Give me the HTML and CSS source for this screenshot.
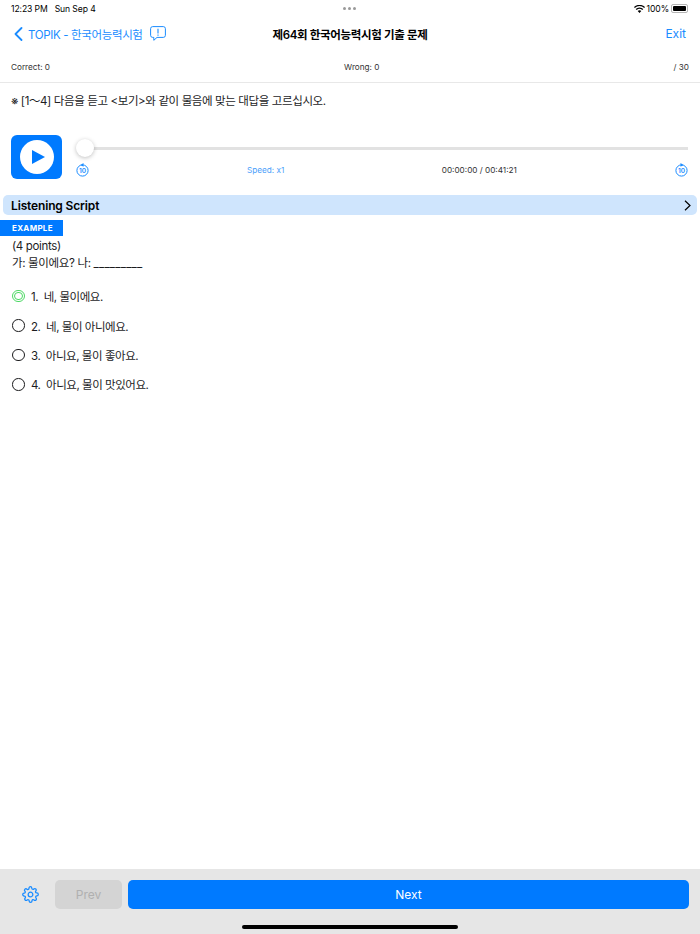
FILE: index.html
```html
<!DOCTYPE html>
<html lang="ko">
<head>
    <meta charset="UTF-8">
    <title>TOPIK</title>
    <link rel="stylesheet" href="styles.css">
</head>
<body>
    <div class="status">
        <div class="status-left"><span>12:23 PM</span><span>Sun Sep 4</span></div>
        <div class="dots"><i></i><i></i><i></i></div>
        <div class="status-right">
            <svg width="11" height="8" viewBox="0 0 11 8"><path d="M5.5 8 3.7 6a2.6 2.6 0 0 1 3.6 0zM2.7 5 1.7 3.9a5.5 5.5 0 0 1 7.6 0L8.3 5a4 4 0 0 0-5.6 0zM.8 3 0 2a8 8 0 0 1 11 0l-.8 1A6.8 6.8 0 0 0 .8 3z" fill="#000"/></svg>
            <span>100%</span>
            <div class="battery"><div class="battery-fill"></div></div>
        </div>
    </div>

    <div class="nav">
        <div class="nav-left">
            <svg class="back" width="9" height="14" viewBox="0 0 9 14"><path d="M7.5 1 1.500 7l6 6" fill="none" stroke="#1a8cff" stroke-width="1.800" stroke-linecap="round" stroke-linejoin="round"/></svg>
            <span>TOPIK - 한국어능력시험</span>
            <svg class="report" width="16" height="15" viewBox="0 0 16 15"><path d="M2.700.6h10.600a2.100 2.100 0 0 1 2.100 2.100v6.600a2.100 2.100 0 0 1-2.100 2.100H7L3.800 14.300v-2.900H2.700A2.100 2.100 0 0 1 .6 9.300V2.700A2.100 2.100 0 0 1 2.700.6z" fill="none" stroke="#1a8cff"/><path d="M8 2.800v4.700M8 8.600v1.100" stroke="#1a8cff" stroke-width="1.100"/></svg>
        </div>
        <div class="nav-title">제64회 한국어능력시험 기출 문제</div>
        <div class="nav-right">Exit</div>
    </div>

    <div class="stats">
        <div>Correct: 0</div>
        <div>Wrong: 0</div>
        <div>/ 30</div>
    </div>

    <div class="question">※ [1～4] 다음을 듣고 &lt;보기&gt;와 같이 물음에 맞는 대답을 고르십시오.</div>

    <div class="player">
        <div class="play-btn">
            <div class="play-circle">
                <svg width="13" height="14" viewBox="0 0 13 14"><path d="M0 0 13 7 0 14z" fill="#007aff"/></svg>
            </div>
        </div>
        <div class="player-main">
            <div class="slider"><div class="thumb"></div></div>
            <div class="controls">
                <svg class="skip" width="13" height="14" viewBox="0 0 13 14"><circle cx="6.500" cy="7.500" r="5.600" fill="none" stroke="#1a8cff"/><path d="M7.500 0 4.500 1.900 7.500 3.800z" fill="#1a8cff"/><text x="6.500" y="10" text-anchor="middle" class="skip-num">10</text></svg>
                <div class="speed">Speed: x1</div>
                <div class="time">00:00:00 / 00:41:21</div>
                <svg class="skip" width="13" height="14" viewBox="0 0 13 14"><circle cx="6.500" cy="7.500" r="5.600" fill="none" stroke="#1a8cff"/><path d="M5.500 0 8.500 1.900 5.500 3.800z" fill="#1a8cff"/><text x="6.500" y="10" text-anchor="middle" class="skip-num">10</text></svg>
            </div>
        </div>
    </div>

    <div class="script-bar">
        <span>Listening Script</span>
        <svg width="7" height="11" viewBox="0 0 7 11"><path d="M1 .7 6 5.500 1 10.300" fill="none" stroke="#000" stroke-width="1.200"/></svg>
    </div>

    <div class="badge">EXAMPLE</div>
    <div class="prompt">
        <div>(4 points)</div>
        <div>가: 물이에요? 나: <span class="blank">_________</span></div>
    </div>

    <div class="options">
        <div class="option"><div class="radio radio-on"></div><span>1.&nbsp; 네, 물이에요.</span></div>
        <div class="option"><div class="radio"></div><span>2.&nbsp; 네, 물이 아니에요.</span></div>
        <div class="option"><div class="radio"></div><span>3.&nbsp; 아니요, 물이 좋아요.</span></div>
        <div class="option"><div class="radio"></div><span>4.&nbsp; 아니요, 물이 맛있어요.</span></div>
    </div>

    <div class="footer">
        <svg class="gear" width="17" height="17" viewBox="0 0 24 24"><path d="M12 15.300a3.300 3.300 0 1 0 0-6.600 3.300 3.300 0 0 0 0 6.600z" fill="none" stroke="#1a8cff" stroke-width="1.800"/><path d="M19.400 15a1.650 1.650 0 0 0 .33 1.820l.06.06a2 2 0 1 1-2.830 2.830l-.06-.06a1.650 1.650 0 0 0-2.800 1.170V21a2 2 0 0 1-4 0v-.09a1.650 1.650 0 0 0-2.800-1.110l-.06.06a2 2 0 1 1-2.830-2.830l.06-.06a1.650 1.650 0 0 0-1.170-2.800H3a2 2 0 0 1 0-4h.09a1.650 1.650 0 0 0 1.110-2.800l-.06-.06a2 2 0 1 1 2.830-2.830l.06.06a1.650 1.650 0 0 0 2.800-1.170V3a2 2 0 0 1 4 0v.09a1.650 1.650 0 0 0 2.800 1.110l.06-.06a2 2 0 1 1 2.830 2.830l-.06.06a1.650 1.650 0 0 0 1.170 2.800H21a2 2 0 0 1 0 4h-.09a1.650 1.650 0 0 0-1.510 1.170z" fill="none" stroke="#1a8cff" stroke-width="1.800"/></svg>
        <div class="btn btn-prev">Prev</div>
        <div class="btn btn-next">Next</div>
    </div>
    <div class="home-bar"></div>
</body>
</html>
```

FILE: styles.css
```css
*{
    margin: 0;
    padding: 0;
    box-sizing: border-box;
}
html,body{
    height: 100%;
}
body{
    position: relative;
    display: flex;
    flex-direction: column;
    overflow: hidden;
    background-color: white;
    color: #1c1c1e;
    font-family: Inter, "Noto Sans CJK KR", sans-serif;
    font-size: 11.5px;
    letter-spacing: -0.35px;
}
.status{
    display: grid;
    grid-template-columns: 1fr auto 1fr;
    align-items: center;
    height: 17px;
    padding: 0 12px 0 11px;
    font-size: 8.6px;
    letter-spacing: -0.1px;
    color: #000;
}
.status-left{
    display: flex;
    gap: 7px;
}
.dots{
    display: flex;
    gap: 2px;
}
.dots i{
    width: 3px;
    height: 3px;
    border-radius: 50%;
    background-color: #9a9a9a;
}
.status-right{
    display: flex;
    justify-content: flex-end;
    align-items: center;
    gap: 2px;
}
.battery{
    width: 17px;
    height: 9px;
    padding: 1px;
    border: 0.5px solid #b5b5b5;
    border-radius: 2px;
}
.battery-fill{
    height: 100%;
    border-radius: 1px;
    background-color: #000;
}
.nav{
    display: grid;
    grid-template-columns: 1fr auto 1fr;
    align-items: center;
    height: 33px;
}
.nav-left{
    display: flex;
    align-items: center;
    padding-left: 14px;
    color: #1a8cff;
}
.back{
    margin-right: 5px;
}
.report{
    margin-left: 7px;
}
.nav-title{
    font-weight: 600;
    color: #000;
}
.nav-right{
    padding-right: 14px;
    text-align: right;
    color: #1a8cff;
    font-size: 12px;
    letter-spacing: 0;
}
.stats{
    display: flex;
    justify-content: space-between;
    align-items: center;
    height: 33px;
    padding: 2px 11px 0;
    border-bottom: 1px solid #e8e8e8;
    font-size: 8.2px;
    letter-spacing: 0;
    color: #333;
}
.question{
    height: 52px;
    padding: 10px 11px 0;
    line-height: 17px;
    letter-spacing: -0.38px;
}
.player{
    display: flex;
    height: 60px;
    padding-left: 11px;
}
.play-btn{
    display: flex;
    align-items: center;
    justify-content: center;
    width: 51px;
    height: 44px;
    border-radius: 6px;
    background-color: #007aff;
}
.play-circle{
    display: flex;
    align-items: center;
    justify-content: center;
    width: 34px;
    height: 34px;
    padding-left: 3px;
    border-radius: 50%;
    background-color: white;
}
.player-main{
    flex: 1;
    padding-left: 23px;
    padding-right: 12px;
}
.slider{
    position: relative;
    height: 3px;
    margin-top: 12px;
    background-color: #e2e2e2;
}
.thumb{
    position: absolute;
    left: -9px;
    top: -8px;
    width: 18px;
    height: 18px;
    border-radius: 50%;
    background-color: white;
    box-shadow: 0 1px 4px rgba(0,0,0,0.25);
}
.controls{
    display: grid;
    grid-template-columns: 13px 1fr 1fr 13px;
    align-items: center;
    margin-top: 13px;
    margin-left: -9.5px;
    font-size: 8.2px;
    letter-spacing: 0;
}
.skip-num{
    font-size: 6.5px;
    font-weight: 600;
    fill: #1a8cff;
}
.speed{
    padding-left: 158.5px;
    color: #4aa0fa;
}
.time{
    padding-left: 60px;
    color: #333;
}
.script-bar{
    display: flex;
    justify-content: space-between;
    align-items: center;
    height: 20px;
    margin: 0 3px;
    padding: 0 6px 0 8px;
    border-radius: 5px;
    background-color: #cfe5fd;
    font-size: 12px;
    font-weight: 600;
    letter-spacing: -0.15px;
    color: #000;
}
.badge{
    width: 63px;
    height: 16px;
    margin-top: 5px;
    padding-left: 12px;
    background-color: #007aff;
    color: white;
    font-size: 8px;
    font-weight: 700;
    line-height: 16px;
    letter-spacing: 0.3px;
}
.prompt{
    padding: 1.5px 12px 0;
    line-height: 17px;
}
.blank{
    letter-spacing: 0.2px;
}
.options{
    display: flex;
    flex-direction: column;
    flex: 1;
    padding-top: 10px;
    letter-spacing: -0.45px;
}
.option{
    display: flex;
    align-items: center;
    gap: 6.5px;
    height: 29.4px;
    padding-left: 12px;
}
.radio{
    width: 12.5px;
    height: 12.5px;
    border: 1.4px solid #1c1c1e;
    border-radius: 50%;
}
.radio-on{
    display: flex;
    align-items: center;
    justify-content: center;
    border-width: 1.1px;
    border-color: #4cd964;
}
.radio-on::after{
    content: "";
    width: 6.5px;
    height: 6.5px;
    border: 1.1px solid #4cd964;
    border-radius: 50%;
}
.footer{
    display: flex;
    height: 65px;
    padding: 11px 11px 0 22px;
    background-color: #e6e6e6;
    font-size: 12px;
    letter-spacing: 0;
}
.gear{
    margin: 6px 16px 0 0;
}
.btn{
    height: 29px;
    border-radius: 5px;
    text-align: center;
    line-height: 29px;
}
.btn-prev{
    width: 67px;
    margin-right: 6px;
    background-color: #d4d4d4;
    color: #b0b0b0;
}
.btn-next{
    flex: 1;
    background-color: #007aff;
    color: white;
}
.home-bar{
    position: absolute;
    left: 242px;
    bottom: 5px;
    width: 216px;
    height: 4px;
    border-radius: 2px;
    background-color: #000;
}
```
